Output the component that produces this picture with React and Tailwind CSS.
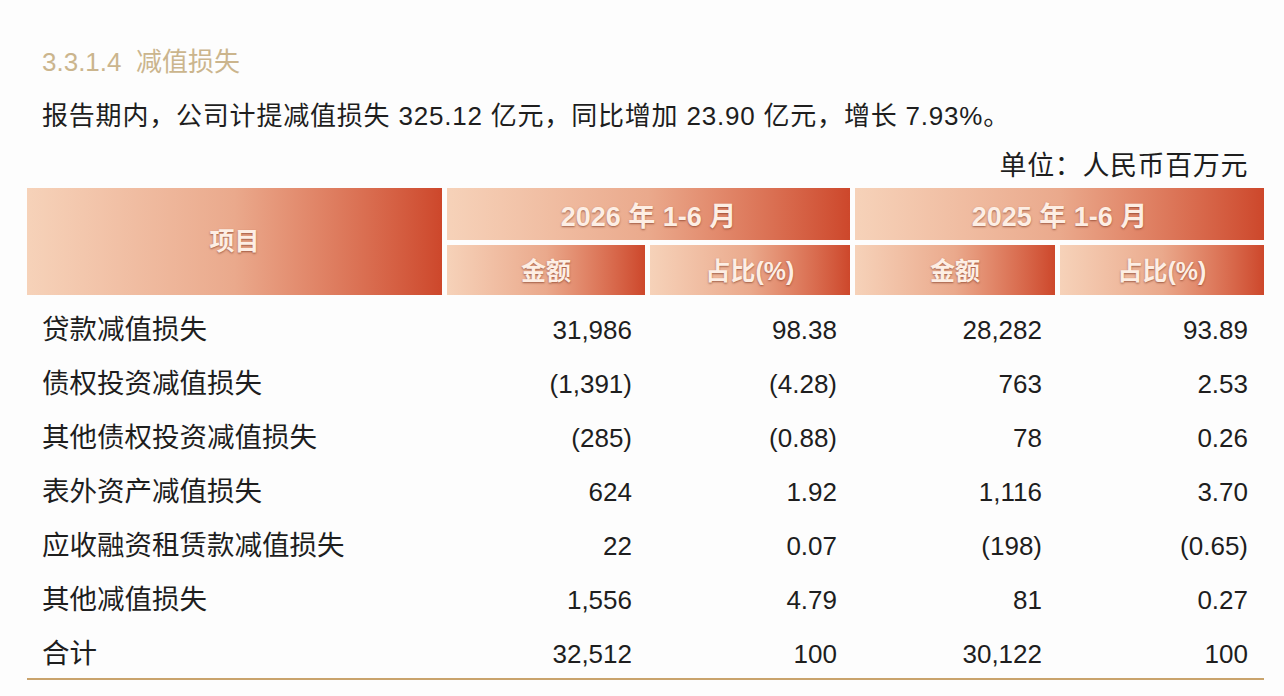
const rows = [
  ["贷款减值损失", "31,986", "98.38", "28,282", "93.89"],
  ["债权投资减值损失", "(1,391)", "(4.28)", "763", "2.53"],
  ["其他债权投资减值损失", "(285)", "(0.88)", "78", "0.26"],
  ["表外资产减值损失", "624", "1.92", "1,116", "3.70"],
  ["应收融资租赁款减值损失", "22", "0.07", "(198)", "(0.65)"],
  ["其他减值损失", "1,556", "4.79", "81", "0.27"],
  ["合计", "32,512", "100", "30,122", "100"],
];

const head =
  "flex items-center justify-center font-bold text-[#fdeee4] bg-gradient-to-r from-[#f6d2b9] via-[#eaa98c] to-[#cd472b] [text-shadow:0_1px_2px_rgba(110,40,20,0.6)]";

export default function App() {
  return (
    <div className="w-[1284px] h-[696px] bg-[#fdfdfd] pt-[45px] pl-[27px] font-['Liberation_Sans','Noto_Sans_CJK_SC',sans-serif]">
      <div className="w-[1237px]">
        <div className="pl-[15px] h-[34px] leading-[34px] text-[26px] text-[#cbb58d]">
          3.3.1.4&nbsp;&nbsp;减值损失
        </div>

        <div className="pl-[15px] mt-[21px] h-[32px] leading-[32px] text-[26px] tracking-[0.8px] text-[#1e1e1e]">
          报告期内，公司计提减值损失 325.12 亿元，同比增加 23.90 亿元，增长 7.93%。
        </div>

        <div className="mt-[18px] h-[32px] leading-[32px] text-right pr-[16px] text-[27px] tracking-[0.6px] text-[#1e1e1e]">
          单位：人民币百万元
        </div>

        <div className="mt-[6px] grid grid-cols-[415px_198px_200px_200px_204px] grid-rows-[52px_50px] gap-[5px]">
          <div className={head + " row-span-2 text-[25px]"}>项目</div>
          <div className={head + " col-span-2 text-[27px] pt-[6px]"}>2026 年 1-6 月</div>
          <div className={head + " col-span-2 text-[27px] pt-[6px]"}>2025 年 1-6 月</div>
          <div className={head + " text-[25px] pt-[3px]"}>金额</div>
          <div className={head + " text-[25px] pt-[3px]"}>占比(%)</div>
          <div className={head + " text-[25px] pt-[3px]"}>金额</div>
          <div className={head + " text-[25px] pt-[3px]"}>占比(%)</div>
        </div>

        <div className="mt-[5px] border-b-[2px] border-[#c9a36c]">
          {rows.map((r) => (
            <div
              key={r[0]}
              className="grid grid-cols-[420px_203px_205px_205px_204px] h-[54px] pt-[6px] items-center text-[26px] text-[#1e1e1e]"
            >
              <div className="pl-[15px] text-[27.5px]">{r[0]}</div>
              <div className="text-right pr-[18px]">{r[1]}</div>
              <div className="text-right pr-[18px]">{r[2]}</div>
              <div className="text-right pr-[18px]">{r[3]}</div>
              <div className="text-right pr-[16px]">{r[4]}</div>
            </div>
          ))}
        </div>
      </div>
    </div>
  );
}
